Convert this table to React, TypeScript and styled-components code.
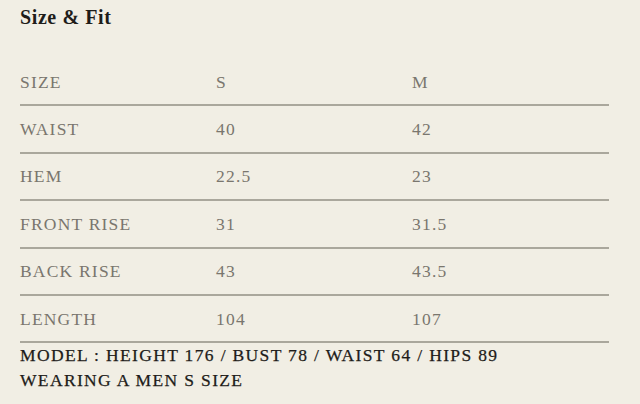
import React from "react";
import styled, { createGlobalStyle } from "styled-components";

const Global = createGlobalStyle`
  html, body { margin: 0; padding: 0; background: #f1eee4; }
  body { font-family: "Liberation Serif", "Times New Roman", serif; }
`;

const Page = styled.div`
  width: 640px;
  height: 404px;
  box-sizing: border-box;
  padding: 0 31px 0 20px;
  background: #f1eee4;
  overflow: hidden;
`;

const Title = styled.h2`
  margin: 0;
  height: 59px;
  padding-top: 5px;
  box-sizing: border-box;
  font-size: 20px;
  font-weight: 700;
  letter-spacing: 0.6px;
  color: #1f1d1a;
  line-height: 24px;
`;

const Row = styled.div`
  display: grid;
  grid-template-columns: 196px 196px 1fr;
  align-items: center;
  height: 45.4px;
  border-bottom: 2px solid #aaa79c;
`;

const Cell = styled.div`
  font-size: 17.5px;
  color: #7a766e;
  letter-spacing: 1.2px;
  line-height: 18px;
`;

const Note = styled.div`
  padding-top: 0;
  font-size: 17.5px;
  line-height: 25px;
  color: #1e1c19;
  letter-spacing: 1.35px;
  -webkit-text-stroke: 0.25px #1e1c19;
`;

const rows: [string, string, string][] = [
  ["SIZE", "S", "M"],
  ["WAIST", "40", "42"],
  ["HEM", "22.5", "23"],
  ["FRONT RISE", "31", "31.5"],
  ["BACK RISE", "43", "43.5"],
  ["LENGTH", "104", "107"],
];

export default function App() {
  return (
    <Page>
      <Global />
      <Title>Size &amp; Fit</Title>
      {rows.map((r) => (
        <Row key={r[0]}>
          {r.map((c, i) => (
            <Cell key={i}>{c}</Cell>
          ))}
        </Row>
      ))}
      <Note>
        MODEL : HEIGHT 176 / BUST 78 / WAIST 64 / HIPS 89
        <br />
        WEARING A MEN S SIZE
      </Note>
    </Page>
  );
}
